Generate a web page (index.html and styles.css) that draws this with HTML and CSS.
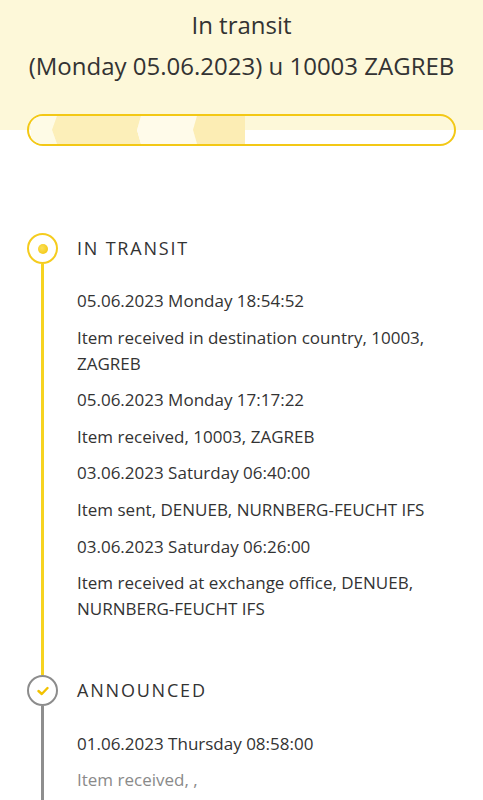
FILE: index.html
```html
<!DOCTYPE html>
<html>
<head lang="en">
    <meta charset="UTF-8">
    <title>Tracking</title>
    <link rel="stylesheet" href="styles.css">
</head>
<body>
<div class="header">
    <h1 class="title">In transit<br>(Monday 05.06.2023) u 10003 ZAGREB</h1>
    <div class="progress">
        <svg class="chevrons" width="220" height="28" viewBox="0 0 220 28">
            <polygon points="0,0 26,0 21,14 26,28 0,28" fill="#fefbe6"/>
            <polygon points="26,0 110,0 106,14 110,28 26,28 21,14" fill="#fcefb9"/>
            <polygon points="110,0 166,0 162,14 166,28 110,28 106,14" fill="#fffbea"/>
            <polygon points="166,0 214,0 214,28 166,28 162,14" fill="#fcedb4"/>
        </svg>
    </div>
</div>

<div class="timeline">
    <div class="stage">
        <div class="rail">
            <span class="node node-active"><span class="dot"></span></span>
            <span class="line"></span>
        </div>
        <div class="content">
            <h2 class="stage-title">IN TRANSIT</h2>
            <p>05.06.2023 Monday 18:54:52</p>
            <p>Item received in destination country, 10003, ZAGREB</p>
            <p>05.06.2023 Monday 17:17:22</p>
            <p>Item received, 10003, ZAGREB</p>
            <p>03.06.2023 Saturday 06:40:00</p>
            <p>Item sent, DENUEB, NURNBERG-FEUCHT IFS</p>
            <p>03.06.2023 Saturday 06:26:00</p>
            <p>Item received at exchange office, DENUEB, NURNBERG-FEUCHT IFS</p>
        </div>
    </div>

    <div class="stage stage-done">
        <div class="rail">
            <span class="node node-done">
                <svg width="12" height="10" viewBox="0 0 12 10"><path d="M1.5 5 L4.8 8 L10.5 2" fill="none" stroke="#f2c200" stroke-width="2.4" stroke-linecap="round" stroke-linejoin="round"/></svg>
            </span>
            <span class="line line-gray"></span>
        </div>
        <div class="content">
            <h2 class="stage-title">ANNOUNCED</h2>
            <p>01.06.2023 Thursday 08:58:00</p>
            <p class="muted">Item received, ,</p>
        </div>
    </div>
</div>
</body>
</html>
```

FILE: styles.css
```css
* {
    padding: 0;
    margin: 0;
    box-sizing: border-box;
}

body {
    font-family: "Open Sans", "Noto Sans", sans-serif;
    color: #333;
    background: #fff;
    overflow: hidden;
}

.header {
    background: linear-gradient(#fdf8d9 130px, #fff 130px);
    padding: 4px 27px 0;
}

.title {
    font-size: 24px;
    font-weight: 400;
    line-height: 41px;
    text-align: center;
    color: #333;
    white-space: nowrap;
}

.progress {
    margin-top: 28px;
    height: 32px;
    border: 2.5px solid #f3c815;
    border-radius: 16px;
    overflow: hidden;
    display: flex;
    align-items: center;
}

.chevrons {
    display: block;
    margin-left: 2px;
}

.timeline {
    padding: 87px 14px 0 27px;
}

.stage {
    display: flex;
}

.rail {
    width: 31px;
    display: flex;
    flex-direction: column;
    align-items: center;
    flex-shrink: 0;
}

.node {
    width: 31px;
    height: 31px;
    border-radius: 50%;
    display: flex;
    align-items: center;
    justify-content: center;
    flex-shrink: 0;
    background: #fff;
}

.node-active {
    border: 2px solid #f5cc1e;
}

.dot {
    width: 10px;
    height: 10px;
    border-radius: 50%;
    background: radial-gradient(circle at 40% 40%, #fbe05a, #f2c200);
}

.node-done {
    border: 2px solid #8c8c8c;
}

.node-done svg {
    display: block;
    margin-top: 1px;
}

.line {
    width: 3px;
    flex: 1;
    background: #f6d320;
}

.line-gray {
    background: #8e8e8e;
    min-height: 120px;
}

.content {
    padding-left: 19px;
    padding-bottom: 42px;
    flex: 1;
}

.stage-title {
    font-size: 18px;
    font-weight: 400;
    letter-spacing: 1.8px;
    line-height: 31px;
    color: #333;
    margin-bottom: 24px;
}

.content p {
    font-size: 17px;
    line-height: 26px;
    margin-bottom: 10.6px;
}

.content p.muted {
    color: #8a8a8a;
}

.stage-done .content {
    padding-bottom: 0;
}

.stage-done .stage-title {
    margin-bottom: 25px;
}
```
